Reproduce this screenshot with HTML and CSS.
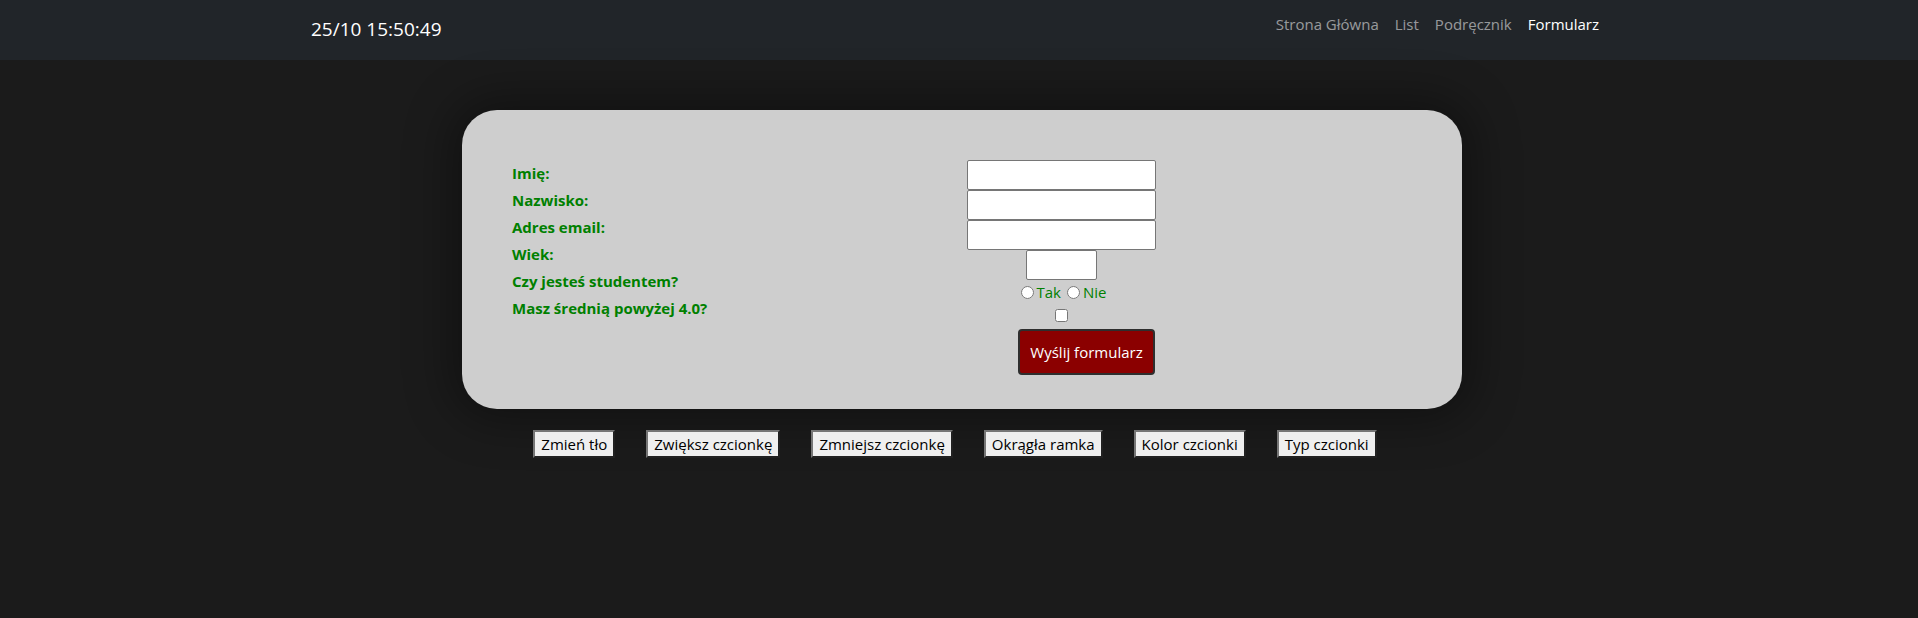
FILE: index.html
```html
<!DOCTYPE html>
<html lang="pl">
<head>
<meta charset="utf-8">
<title>Formularz</title>
<link rel="stylesheet" href="styles.css">
</head>
<body>
<nav class="navbar">
  <div class="container">
    <span class="brand">25/10 15:50:49</span>
    <ul class="nav">
      <li><a class="nav-link" href="#">Strona Główna</a></li>
      <li><a class="nav-link" href="#">List</a></li>
      <li><a class="nav-link" href="#">Podręcznik</a></li>
      <li><a class="nav-link active" href="#">Formularz</a></li>
    </ul>
  </div>
</nav>
<main>
  <form class="card">
    <div class="labels">
      <label>Imię:</label>
      <label>Nazwisko:</label>
      <label>Adres email:</label>
      <label>Wiek:</label>
      <label>Czy jesteś studentem?</label>
      <label>Masz średnią powyżej 4.0?</label>
    </div>
    <div class="fields">
      <input class="text-input" type="text">
      <input class="text-input" type="text">
      <input class="text-input" type="email">
      <input class="age-input" type="text">
      <div class="radios">
        <input type="radio" name="student" class="radio"><span class="opt">Tak</span><input type="radio" name="student" class="radio"><span class="opt">Nie</span>
      </div>
      <input type="checkbox" class="check">
      <button type="button" class="submit">Wyślij formularz</button>
    </div>
  </form>
  <div class="tools">
    <button type="button" class="tool">Zmień tło</button>
    <button type="button" class="tool">Zwiększ czcionkę</button>
    <button type="button" class="tool">Zmniejsz czcionkę</button>
    <button type="button" class="tool">Okrągła ramka</button>
    <button type="button" class="tool">Kolor czcionki</button>
    <button type="button" class="tool">Typ czcionki</button>
  </div>
</main>
</body>
</html>
```
FILE: styles.css
```css
* { box-sizing: border-box; }
html, body { margin: 0; padding: 0; }
body {
  background: #1b1b1b;
  font-family: "Open Sans", "Noto Sans", sans-serif;
  font-size: 16px;
  height: 618px;
  overflow: hidden;
}
.navbar {
  height: 60px;
  background: #212529;
}
.container {
  width: 1320px;
  margin: 0 auto;
  padding: 0 12px;
  display: flex;
  justify-content: space-between;
  align-items: flex-start;
}
.brand {
  margin-top: 14px;
  font-size: 19px;
  line-height: 30px;
  color: #fff;
}
.nav {
  list-style: none;
  margin: 12px 0 0;
  padding: 0;
  display: flex;
}
.nav-link {
  display: block;
  padding: 0 8px;
  line-height: 24px;
  font-size: 15px;
  color: rgba(255,255,255,.55);
  text-decoration: none;
}
.nav-link.active { color: #fff; }

.card {
  width: 1000px;
  margin: 50px 0 0 calc(50% - 497px);
  padding: 50px 50px 34px;
  background: #cecece;
  border-radius: 35px;
  box-shadow: 0 0 45px 12px rgba(0,0,0,.35);
  display: flex;
}
.labels {
  width: 455px;
  display: flex;
  flex-direction: column;
}
.labels label {
  display: block;
  font-weight: bold;
  font-size: 15px;
  line-height: 27px;
  color: #008000;
}
.fields {
  width: 189px;
  display: flex;
  flex-direction: column;
  align-items: center;
}
.text-input, .age-input {
  display: block;
  height: 30px;
  margin: 0;
  border: 1px solid #767676;
  border-radius: 2px;
  background: #fff;
}
.text-input { width: 189px; }
.age-input { width: 71px; }
.radios {
  height: 24px;
  display: flex;
  align-items: center;
  color: #008000;
  font-size: 15px;
}
.radio {
  width: 13px;
  height: 13px;
  margin: 0 3px 0 5px;
}
.opt { margin-right: 1px; }
.check {
  width: 13px;
  height: 13px;
  margin: 5px 0 0;
}
.submit {
  margin: 7px 0 0 50px;
  height: 46px;
  padding: 0 10px;
  background: #8b0000;
  color: #fff;
  border: 2px solid #2e2e2e;
  border-radius: 4px;
  font-family: inherit;
  font-size: 15px;
}
.tools {
  display: flex;
  justify-content: center;
  gap: 31px;
  padding-right: 8px;
  margin-top: 21px;
}
.tool {
  height: 28px;
  padding: 1px 6px;
  background: #efefef;
  color: #000;
  border: 2px outset #767676;
  font-family: inherit;
  font-size: 15px;
  line-height: 20px;
}
```
